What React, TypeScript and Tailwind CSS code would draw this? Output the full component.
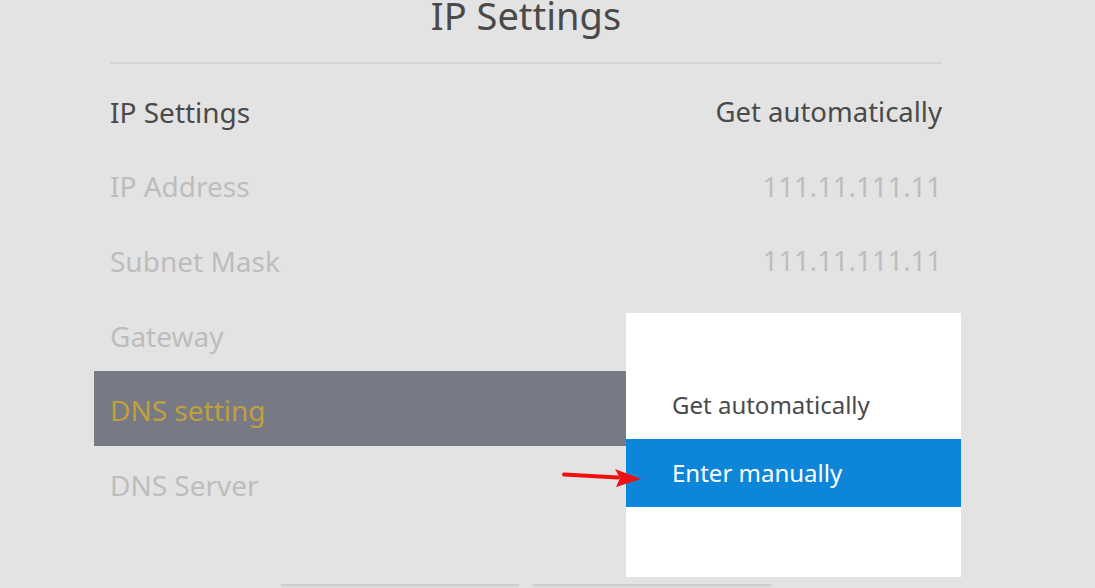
import { useState } from 'react'

const rows = [
  { label: 'IP Settings', value: 'Get automatically', enabled: true },
  { label: 'IP Address', value: '111.11.111.11', enabled: false },
  { label: 'Subnet Mask', value: '111.11.111.11', enabled: false },
  { label: 'Gateway', value: '', enabled: false },
  { label: 'DNS setting', value: '', enabled: true, focused: true },
  { label: 'DNS Server', value: '', enabled: false },
]

const options = ['Get automatically', 'Enter manually']

export default function App() {
  const [selected] = useState(1)

  return (
    <div
      className="relative h-[588px] w-[1095px] overflow-hidden bg-[#e3e3e3]"
      style={{ fontFamily: '"Noto Sans", "Open Sans", sans-serif' }}
    >
      <div className="ml-[94px] w-[864px]">
        <div className="mx-4 flex h-[64px] flex-col items-center border-b-2 border-[#d6d6d6]">
          <h1 className="-mt-[9px] text-[38px] leading-[48px] text-[#4a4a4a]">IP Settings</h1>
        </div>

        <div className="mt-[9px]">
          {rows.map((row) => (
            <div
              key={row.label}
              className={`flex h-[74.6px] items-center justify-between px-4 pt-[3px] text-[28px] ${
                row.focused ? 'bg-[#777a84]' : ''
              }`}
            >
              <span
                className={
                  row.focused
                    ? 'text-[#c0a03e]'
                    : row.enabled
                      ? 'text-[#4a4a4a]'
                      : 'text-[#bdbdbd]'
                }
              >
                {row.label}
              </span>
              <span className={`text-[27.5px] ${row.enabled ? 'text-[#4a4a4a]' : 'text-[#bdbdbd]'}`}>
                {row.value}
              </span>
            </div>
          ))}
        </div>

        <div className="mt-[63px] flex justify-center gap-[14px]">
          <div className="h-10 w-[238px] border-t-2 border-[#cccccc] bg-[#dcdcdc]" />
          <div className="h-10 w-[238px] border-t-2 border-[#cccccc] bg-[#dcdcdc]" />
        </div>
      </div>

      {/* dropdown menu */}
      <div className="absolute left-[626px] top-[313px] flex h-[264px] w-[335px] flex-col bg-white pt-[58px] text-[24px]">
        {options.map((opt, i) => (
          <div
            key={opt}
            className={`flex h-[68px] items-center pl-[46px] ${
              i === selected ? 'bg-[#0d86d9] text-white' : 'text-[#4a4a4a]'
            }`}
          >
            {opt}
          </div>
        ))}
      </div>

      {/* annotation arrow */}
      <svg className="absolute left-[560px] top-[462px]" width="84" height="28" viewBox="0 0 84 28">
        <path d="M4 12.5 L58 15.5" stroke="#ee1111" strokeWidth="4" strokeLinecap="round" />
        <path d="M55 7 L81 17 L56 25 L60 16 Z" fill="#ee1111" />
      </svg>
    </div>
  )
}
